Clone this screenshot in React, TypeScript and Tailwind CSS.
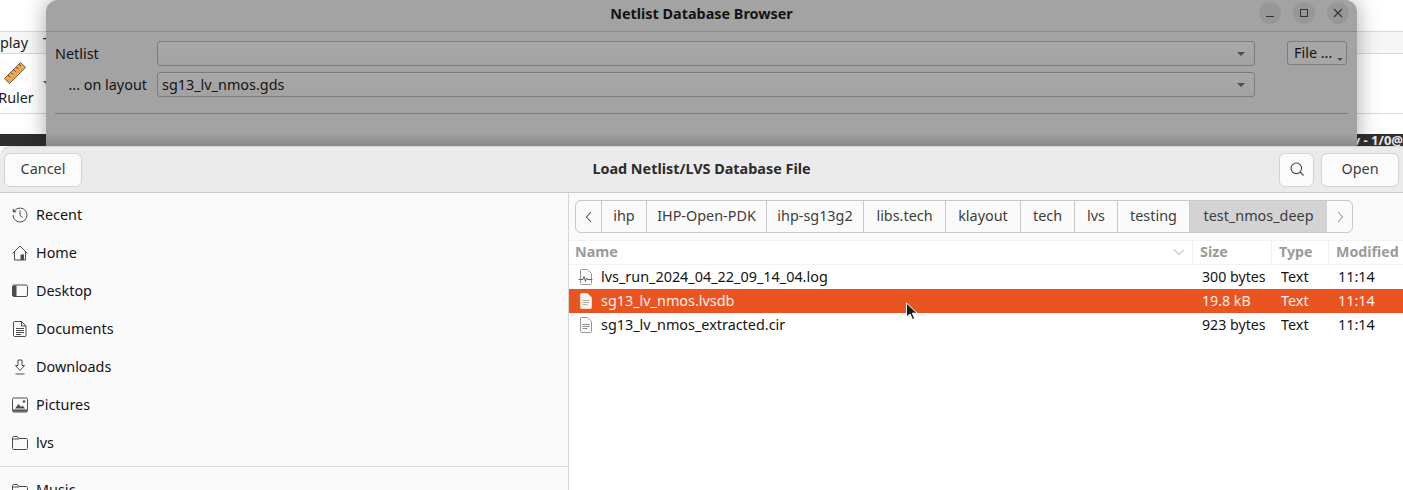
const PLACES = ["Recent", "Home", "Desktop", "Documents", "Downloads", "Pictures", "lvs"];

const CRUMBS = [
  { label: "ihp", width: "w-[45px]" },
  { label: "IHP-Open-PDK", width: "w-[120px]" },
  { label: "ihp-sg13g2", width: "w-[97px]" },
  { label: "libs.tech", width: "w-[82px]" },
  { label: "klayout", width: "w-[75px]" },
  { label: "tech", width: "w-[54px]" },
  { label: "lvs", width: "w-[43px]" },
  { label: "testing", width: "w-[72px]" },
];

const FILES = [
  { name: "lvs_run_2024_04_22_09_14_04.log", size: "300 bytes", log: true },
  { name: "sg13_lv_nmos.lvsdb", size: "19.8 kB", selected: true },
  { name: "sg13_lv_nmos_extracted.cir", size: "923 bytes" },
];

function PlaceIcon({ name }: { name: string }) {
  return (
    <svg width="16" height="16" viewBox="0 0 16 16" fill="none" stroke="#4d4d4d" strokeWidth="1" className="shrink-0">
      {name === "Recent" && (
        <>
          <path d="M2.600 3.600A7 7 0 1 1 1 8" />
          <path d="M.8 1.500v3.800h3.800z" fill="#4d4d4d" stroke="none" />
          <path d="M8 3.500v4.900l2.800 2.200" />
        </>
      )}
      {name === "Home" && (
        <>
          <path d="M.5 8.500 8 1l7.500 7.500" />
          <path d="M2.500 7v8h11V7" />
          <path d="M8.500 9.500h3.500v5.500H8.500z" fill="#4d4d4d" stroke="none" />
        </>
      )}
      {name === "Desktop" && (
        <>
          <rect x=".5" y="2" width="15" height="11.500" rx="1.500" />
          <path d="M1 2.500h3.500v10.500H1z" fill="#4d4d4d" stroke="none" />
        </>
      )}
      {name === "Documents" && (
        <>
          <path d="M1.500 1.500c0-.6.4-1 1-1h7l4.500 4.500v9.500c0 .6-.4 1-1 1H2.500c-.6 0-1-.4-1-1z" />
          <path d="M9.500.5v4.500H14M4 7.500h8M4 9.500h8M4 11.500h8M4 13.500h5" />
        </>
      )}
      {name === "Downloads" && (
        <>
          <path d="M6 1h4v5.500h2.500L8 11.500 3.500 6.500H6z" />
          <path d="M3.500 15h9" />
        </>
      )}
      {name === "Pictures" && (
        <>
          <rect x=".5" y="1" width="15" height="14" rx="1.500" />
          <path d="M1 12.500h14v2H1zM3 11.500l3.500-4.500 2.500 3 1.500-1.500 2.500 3z" fill="#4d4d4d" stroke="none" />
          <circle cx="12" cy="4.500" r="1.300" fill="#4d4d4d" stroke="none" />
        </>
      )}
      {(name === "lvs" || name === "Music") && (
        <path d="M.5 2.500c0-.6.4-1 1-1h4l1.500 2h7.500c.6 0 1 .4 1 1v9c0 .6-.4 1-1 1h-13c-.6 0-1-.4-1-1zM.5 4H7" />
      )}
    </svg>
  );
}

function FileIcon({ log, selected }: { log?: boolean; selected?: boolean }) {
  const fill = selected ? "#fbf3ef" : "#fafafa";
  const ink = selected ? "#b9b0ab" : "#8f8f8f";
  return (
    <svg width="16" height="16" viewBox="0 0 16 16" fill="none" className="shrink-0">
      <path d="M2.500 1.500c0-.6.4-1 1-1h6l4 4v10c0 .6-.4 1-1 1h-9c-.6 0-1-.4-1-1z" fill={fill} stroke={selected ? "#f3d9cd" : "#9a9a9a"} />
      {log ? (
        <path d="M.5 10.500h4.500l1-3 1.500 5 1-3.500.8 1.500h5" stroke="#666666" />
      ) : (
        <path d="M4.500 7.500h7M4.500 9.500h7M4.500 11.500h5" stroke={ink} />
      )}
    </svg>
  );
}

function ComboBox({ value }: { value?: string }) {
  return (
    <div className="flex h-[25px] w-[1098px] items-center justify-between rounded-[3px] border border-[#7d7d7d] bg-gradient-to-b from-[#a8a8a8] to-[#a2a2a2] pl-[4px] pr-[9px]">
      <span className="pt-[1px]">{value}</span>
      <span className="h-0 w-0 border-x-[4px] border-t-[4px] border-x-transparent border-t-[#4e4e4e]" />
    </div>
  );
}

function NetlistWindow() {
  return (
    <div className="absolute left-[46px] top-0 h-[146px] w-[1311px] rounded-t-[12px] bg-[#a3a3a3] text-[#141414] shadow-[0_0_22px_rgba(0,0,0,0.35)]">
      <div className="relative flex h-[32px] items-center justify-center border-b border-[#8b8b8b] pb-[2px]">
        <span className="font-bold">Netlist Database Browser</span>
        <div className="absolute right-[8px] top-[2px] flex gap-[12px]">
          <div className="flex h-[22px] w-[22px] items-center justify-center rounded-full bg-[#979797]">
            <span className="mt-[7px] h-[1px] w-[8px] bg-[#333333]" />
          </div>
          <div className="flex h-[22px] w-[22px] items-center justify-center rounded-full bg-[#979797]">
            <span className="h-[8px] w-[8px] border border-[#333333]" />
          </div>
          <div className="flex h-[22px] w-[22px] items-center justify-center rounded-full bg-[#979797]">
            <svg width="10" height="10" viewBox="0 0 10 10" stroke="#333333" strokeWidth="1.100">
              <path d="M1 1l8 8M9 1l-8 8" />
            </svg>
          </div>
        </div>
      </div>
      <div className="flex pl-[9px] pr-[10px] pt-[9px]">
        <div className="flex w-[102px] flex-col gap-[6px]">
          <div className="flex h-[25px] items-center pt-[1px]">Netlist</div>
          <div className="flex h-[25px] items-center justify-end pr-[10px] pt-[1px]">... on layout</div>
        </div>
        <div className="flex flex-col gap-[6px]">
          <ComboBox />
          <ComboBox value="sg13_lv_nmos.gds" />
        </div>
        <div className="relative ml-[32px] flex h-[24px] w-[60px] items-center rounded-[3px] border border-[#7d7d7d] bg-[#a6a6a6] pl-[6px] pt-[1px]">
          File ...
          <span className="absolute bottom-[3px] right-[3px] h-0 w-0 border-x-[3px] border-t-[3px] border-x-transparent border-t-[#4e4e4e]" />
        </div>
      </div>
      <div className="mx-[9px] mt-[16px] border-t border-[#7f7f7f]" />
      <div className="absolute inset-x-0 bottom-0 h-[14px] bg-gradient-to-b from-transparent to-[#8a8a8a]" />
    </div>
  );
}

function DialogButton({ children, className }: { children: React.ReactNode; className: string }) {
  return (
    <div className={`flex h-[34px] items-center justify-center rounded-[6px] border border-[#d2d2d2] bg-[#fbfbfb] pb-[1px] text-[#3d3d3d] ${className}`}>
      {children}
    </div>
  );
}

function PathBar() {
  return (
    <div className="flex h-[33px] w-[778px] overflow-hidden rounded-[6px] border border-[#c8c8c8] bg-[#fafafa] text-[#3d3d3d]">
      <div className="flex w-[26px] items-center justify-center border-r border-[#c8c8c8]">
        <svg width="8" height="12" viewBox="0 0 8 12" fill="none" stroke="#555555" strokeWidth="1.100">
          <path d="M6 1 1.500 6 6 11" />
        </svg>
      </div>
      {CRUMBS.map((crumb) => (
        <div key={crumb.label} className={`flex items-center justify-center border-r border-[#c8c8c8] ${crumb.width}`}>
          {crumb.label}
        </div>
      ))}
      <div className="flex w-[137px] items-center justify-center bg-[#d3d3d3]">test_nmos_deep</div>
      <div className="flex flex-1 items-center justify-center">
        <svg width="8" height="12" viewBox="0 0 8 12" fill="none" stroke="#9a9a9a" strokeWidth="1.100">
          <path d="M2 1l4.500 5L2 11" />
        </svg>
      </div>
    </div>
  );
}

function Dialog() {
  return (
    <div className="absolute inset-x-0 top-[146px] flex h-[344px] flex-col rounded-tl-[10px] bg-[#fafafa] text-[#141414]">
      <div className="grid h-[47px] shrink-0 grid-cols-[1fr_auto_1fr] items-center rounded-tl-[10px] border-b border-t border-b-[#c9c9c9] border-t-[#d4d4d4] bg-[#ebebeb] px-[4px]">
        <DialogButton className="w-[78px]">Cancel</DialogButton>
        <span className="pb-[1px] font-bold text-[#2c2c2c]">Load Netlist/LVS Database File</span>
        <div className="flex justify-end gap-[7px]">
          <DialogButton className="w-[35px]">
            <svg width="16" height="16" viewBox="0 0 16 16" fill="none" stroke="#444444" strokeWidth="1.100">
              <circle cx="7.300" cy="7.300" r="5.300" />
              <path d="M11 11l3.500 3.500" />
            </svg>
          </DialogButton>
          <DialogButton className="w-[78px]">Open</DialogButton>
        </div>
      </div>
      <div className="flex min-h-0 flex-1">
        <div className="w-[569px] shrink-0 overflow-hidden border-r border-[#d6d6d6] pt-[3px]">
          {PLACES.map((place) => (
            <div key={place} className="flex h-[38px] items-center gap-[8px] pl-[12px]">
              <PlaceIcon name={place} />
              <span>{place}</span>
            </div>
          ))}
          <div className="mt-[4px] border-t border-[#dcdcdc]" />
          <div className="flex h-[38px] items-center gap-[8px] pl-[12px] pt-[9px]">
            <PlaceIcon name="Music" />
            <span>Music</span>
          </div>
        </div>
        <div className="min-w-0 flex-1 bg-white">
          <div className="bg-[#fafafa] pl-[6px] pt-[7px] pb-[7px]">
            <PathBar />
          </div>
          <div className="flex h-[25px] items-center border-y border-[#f2f2f2] bg-white pb-[1px] font-bold text-[#9a9a9a]">
            <div className="flex h-full w-[624px] items-center justify-between border-r border-[#f2f2f2] pl-[6px] pr-[7px]">
              <span>Name</span>
              <svg width="12" height="8" viewBox="0 0 12 8" fill="none" stroke="#a5a5a5">
                <path d="M1 1.500l5 5 5-5" />
              </svg>
            </div>
            <div className="flex h-full w-[79px] items-center border-r border-[#f2f2f2] pl-[7px]">Size</div>
            <div className="flex h-full w-[57px] items-center border-r border-[#f2f2f2] pl-[7px] text-[14.2px]">Type</div>
            <div className="pl-[7px] text-[14.2px]">Modified</div>
          </div>
          {FILES.map((file) => (
            <div key={file.name} className={`flex h-[24px] items-center ${file.selected ? "bg-[#e95420] text-[#fdf1ec]" : "text-[#141414]"}`}>
              <div className="flex w-[624px] items-center gap-[7px] pl-[9px]">
                <FileIcon log={file.log} selected={file.selected} />
                <span>{file.name}</span>
              </div>
              <div className="w-[79px] pl-[9px] text-[14.2px]">{file.size}</div>
              <div className="w-[57px] pl-[9px]">Text</div>
              <div className="pl-[9px]">11:14</div>
            </div>
          ))}
        </div>
      </div>
    </div>
  );
}

export default function App() {
  return (
    <div className="relative h-[490px] w-[1403px] overflow-hidden bg-white font-['Noto_Sans','Open_Sans',sans-serif] text-[14.4px] leading-none">
      {/* main window behind the dialogs */}
      <div className="flex h-[146px] flex-col text-[#222222]">
        <div className="h-[32px] border-b border-[#d9d9d9] bg-white" />
        <div className="flex h-[22px] items-center gap-[15px] border-b border-[#d9d9d9] bg-[#f6f6f6] pt-[2px]">
          <span>play</span>
          <span>Tools</span>
        </div>
        <div className="relative flex h-[59px] w-[44px] flex-col items-center pt-[7px]">
          <svg width="24" height="24" viewBox="0 0 26 26" className="-ml-[14px]">
            <path d="M1.500 19 19 1.500l5.500 5.500L7 24.500z" fill="#f0a64a" stroke="#555555" />
            <path d="M5.500 15.500l2 2M8.500 12.500l2 2M11.500 9.500l2 2M14.500 6.500l2 2M17.500 3.500l2 2" stroke="#333333" />
          </svg>
          <span className="-ml-[12px] mt-[6px]">Ruler</span>
          <span className="absolute left-[43px] top-[27px] h-0 w-0 border-x-[3px] border-t-[3px] border-x-transparent border-t-[#555555]" />
        </div>
        <div className="h-[21px] w-full border-t border-[#d9d9d9] bg-white" />
        <div className="flex h-[12px] flex-1 justify-end overflow-hidden bg-[#2f2f2f] text-[13px] font-bold text-[#e8e8e8]">
          <span>v - 1/0@</span>
        </div>
      </div>
      <NetlistWindow />
      <Dialog />
      {/* mouse pointer */}
      <svg width="14" height="20" viewBox="0 0 14 20" className="absolute left-[905px] top-[302px]">
        <path d="M1.500 1v14l3.500-3 2.500 5.500 2.200-1-2.400-5.300H12z" fill="#1c1c1c" stroke="#ffffff" strokeWidth="1" />
      </svg>
    </div>
  );
}
